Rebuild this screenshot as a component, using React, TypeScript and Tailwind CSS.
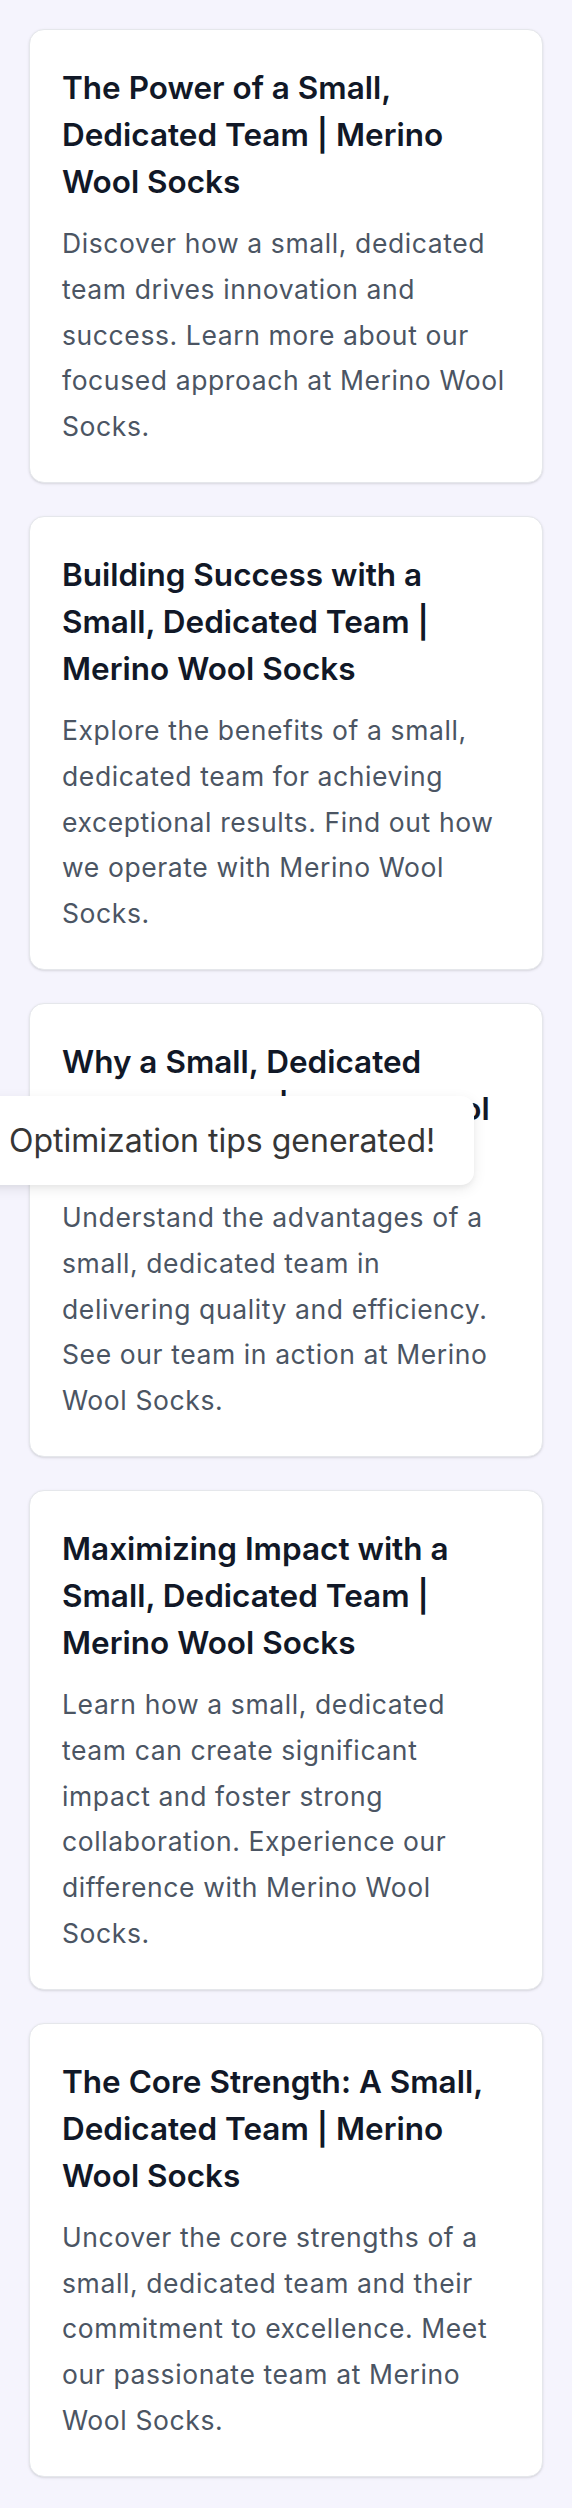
import React from "react";

type Item = { title: string; body: string };

const items: Item[] = [
  {
    title: "The Power of a Small, Dedicated Team | Merino Wool Socks",
    body: "Discover how a small, dedicated team drives innovation and success. Learn more about our focused approach at Merino Wool Socks.",
  },
  {
    title: "Building Success with a Small, Dedicated Team | Merino Wool Socks",
    body: "Explore the benefits of a small, dedicated team for achieving exceptional results. Find out how we operate with Merino Wool Socks.",
  },
  {
    title: "Why a Small, Dedicated Team Matters | Merino Wool Socks",
    body: "Understand the advantages of a small, dedicated team in delivering quality and efficiency. See our team in action at Merino Wool Socks.",
  },
  {
    title: "Maximizing Impact with a Small, Dedicated Team | Merino Wool Socks",
    body: "Learn how a small, dedicated team can create significant impact and foster strong collaboration. Experience our difference with Merino Wool Socks.",
  },
  {
    title: "The Core Strength: A Small, Dedicated Team | Merino Wool Socks",
    body: "Uncover the core strengths of a small, dedicated team and their commitment to excellence. Meet our passionate team at Merino Wool Socks.",
  },
];

export default function App() {
  return (
    <div
      className="relative min-h-screen bg-[#f5f4fd] px-[29px] pt-[29px] pb-[31px]"
      style={{ fontFamily: "Inter, 'Noto Sans', sans-serif" }}
    >
      <div className="flex flex-col gap-[33px]">
        {items.map((it, i) => (
          <div
            key={i}
            className="rounded-[15px] border border-[#e5e7eb] bg-white px-8 pt-[34px] pb-8 shadow-sm"
          >
            <h2 className="mb-4 text-[31.5px] leading-[47px] font-semibold text-[#111827]">
              {it.title}
            </h2>
            <p className="text-[26.5px] leading-[45.8px] tracking-[0.6px] text-[#4b5563]">{it.body}</p>
          </div>
        ))}
      </div>

      <div className="absolute top-[1096px] left-[-20px] flex h-[89px] w-[494px] items-center rounded-[13px] bg-white pl-[29px] shadow-[0_4px_14px_rgba(0,0,0,0.08),0_3px_4px_rgba(0,0,0,0.04)]">
        <span className="text-[32px] leading-[40px] text-[#363636]">Optimization tips generated!</span>
      </div>
    </div>
  );
}
